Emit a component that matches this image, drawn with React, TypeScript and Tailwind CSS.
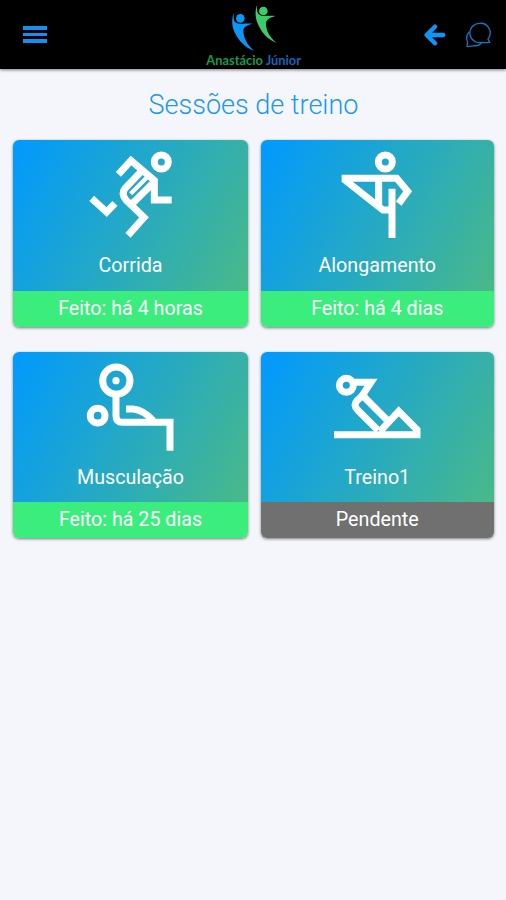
import type { ReactNode } from 'react';

type Session = {
    name: string;
    status: string;
    done: boolean;
    viewBox: string;
    icon: ReactNode;
};

const sessions: Session[] = [
    {
        name: "Corrida",
        status: "Feito: há 4 horas",
        done: true,
        viewBox: "1 0 300 315",
        icon: (
            <>
                <circle cx="242" cy="66" r="21" />
                <path d="M113 103L151 62L221 121V180H273" />
                <path d="M184 92L134 144Q120 162 136 180L190 232L142 286" />
                <path d="M221 125L147 199" />
                <path d="M200 111L150 161" strokeWidth="13" />
                <path d="M33 175L78 216L103 190" />
            </>
        ),
    },
    {
        name: "Alongamento",
        status: "Feito: há 4 dias",
        done: true,
        viewBox: "-8 0 300 315",
        icon: (
            <>
                <circle cx="167" cy="66" r="21" />
                <path d="M36 115H201L234 154L207 191" />
                <path d="M187 210H160L42 117" />
                <path d="M147 114V195" />
                <path d="M187 146V294" />
            </>
        ),
    },
    {
        name: "Musculação",
        status: "Feito: há 25 dias",
        done: true,
        viewBox: "16 6 300 315",
        icon: (
            <>
                <circle cx="122" cy="92" r="41" />
                <circle cx="121" cy="92" r="11" fill="white" stroke="none" />
                <circle cx="66" cy="197" r="22" />
                <path d="M121 132V197Q121 217 141 217H283V302" />
                <path d="M151 177H172Q204 180 232 212" />
            </>
        ),
    },
    {
        name: "Treino1",
        status: "Pendente",
        done: false,
        viewBox: "6 -24 300 315",
        icon: (
            <>
                <circle cx="64" cy="76" r="21" />
                <path d="M86 67H138L112 106L192 186" />
                <path d="M122 99L96 122Q84 134 98 150L159 211" />
                <path d="M27 224H276V209L221 154L165 214" />
            </>
        ),
    },
];

function Logo() {
    return (
        <svg className="h-[69px] w-[120px]" viewBox="0 0 360 207">
            <g fill="#0d96f5">
                <circle cx="136" cy="55" r="13" />
                <path d="M117 38C109 56 110 79 120 99C132 124 151 143 178 153C155 134 145 112 145 91C147 80 155 76 173 71C151 69 134 73 127 70C117 66 114 57 117 38Z" />
            </g>
            <g fill="#3dca68">
                <circle cx="205" cy="33" r="13" />
                <path d="M187 13C179 32 180 54 190 75C202 101 219 119 244 128C222 110 212 88 213 68C215 58 226 52 242 48C220 45 204 50 196 46C187 41 184 32 187 13Z" />
            </g>
            <text x="34" y="196" textLength="284" lengthAdjust="spacingAndGlyphs" fontSize="37" fontWeight="700" fontFamily="Lato, 'Open Sans', sans-serif">
                <tspan fill="#129a4e">Anastácio</tspan>
                <tspan fill="#1763b5"> Júnior</tspan>
            </text>
        </svg>
    );
}

function Header() {
    return (
        <header className="flex h-[69px] justify-between bg-black shadow-[0_1px_3px_rgba(0,0,0,0.5)]">
            <div className="flex w-[195px] items-center pl-[23px]">
                <button aria-label="Menu" className="flex w-6 flex-col gap-[3px]">
                    <span className="h-[3.4px] bg-[#1192ef]" />
                    <span className="h-[3.4px] bg-[#1192ef]" />
                    <span className="h-[3.4px] bg-[#1192ef]" />
                </button>
            </div>

            <Logo />

            <div className="flex w-[191px] items-center justify-end gap-[19px] pr-[15px]">
                <button aria-label="Voltar">
                    <svg className="h-6 w-[22px]" viewBox="0 0 66 72" fill="none" stroke="#0d96fa" strokeWidth="13" strokeLinecap="round" strokeLinejoin="round">
                        <path d="M58 36H11M33 11L8 36L33 61" />
                    </svg>
                </button>
                <button aria-label="Mensagens">
                    <svg className="h-[27px] w-[26px]" viewBox="0 0 78 81" fill="none" stroke="#1177c4" strokeWidth="4" strokeLinejoin="round">
                        <path d="M43 7A29 29 0 1 0 51 64Q63 66 74 64L69 54A29 29 0 0 0 43 7Z" />
                        <path d="M13 32Q0 47 8 64L6 76Q17 77 28 74Q41 76 49 66" />
                    </svg>
                </button>
            </div>
        </header>
    );
}

function SessionCard({ session }: { session: Session }) {
    return (
        <article className="flex flex-col overflow-hidden rounded-md text-center text-[19.7px] text-white shadow-[0_1px_3px_rgba(0,0,0,0.5)]">
            <div className="grow bg-linear-[118deg,#0099ff,#4ab988]">
                <svg className="mx-auto h-[105px] w-[100px]" viewBox={session.viewBox} fill="none" stroke="white" strokeWidth="21">
                    {session.icon}
                </svg>
                <h2 className="pt-[7px] leading-7">{session.name}</h2>
            </div>
            <p className={`h-9 shrink-0 leading-9 ${session.done ? 'bg-[#3aed7c]' : 'bg-[#707070]'}`}>
                {session.status}
            </p>
        </article>
    );
}

export default function App() {
    return (
        <div className="min-h-screen bg-[#f4f6fb] font-['Roboto',sans-serif]">
            <Header />

            <main className="pr-3 pl-[13px]">
                <h1 className="h-[71px] pt-4 text-center text-[27px] leading-10 font-light text-[#2196f3]">
                    Sessões de treino
                </h1>

                <div className="grid grid-cols-[235px_233.5px] grid-rows-[187px_186px] gap-x-[12.5px] gap-y-[25px]">
                    {sessions.map((session) => (
                        <SessionCard key={session.name} session={session} />
                    ))}
                </div>
            </main>
        </div>
    );
}
